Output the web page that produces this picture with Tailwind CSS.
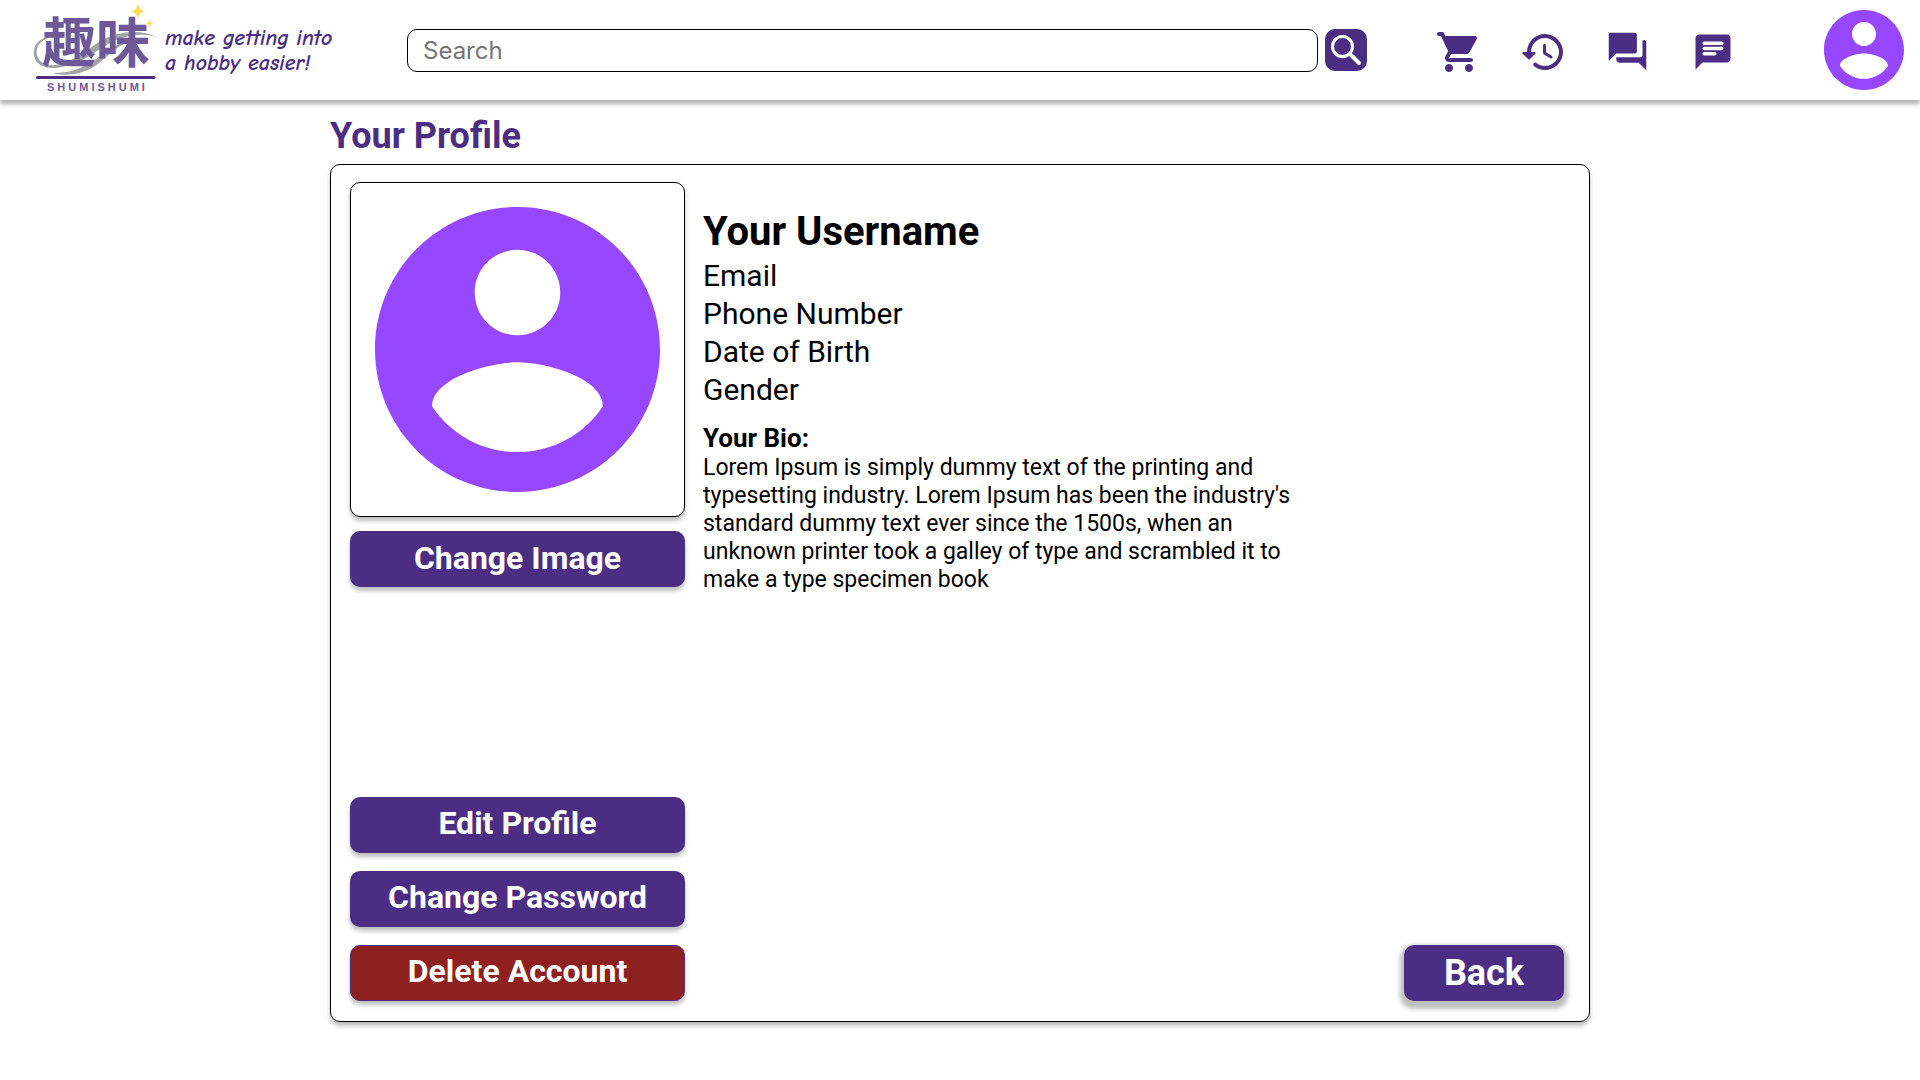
<!DOCTYPE html>
<html lang="en">
<head>
<meta charset="utf-8">
<meta name="viewport" content="width=device-width, initial-scale=1">
<title>Your Profile – Shumishumi</title>
<script src="https://cdn.jsdelivr.net/npm/@tailwindcss/browser@4"></script>
</head>
<body class="flex min-h-screen flex-col bg-white font-['Roboto',sans-serif] text-black">
<header class="flex h-[100px] shrink-0 items-center bg-white pr-4 pl-8 shadow-[0_4px_4px_rgba(0,0,0,0.3)]">
  <a href="#" class="flex shrink-0 items-center" aria-label="Shumishumi home">
    <svg class="h-[100px] w-[126px]" viewBox="32 0 126 100">
      <g fill="#a3a3a3">
        <path d="M55 36C40 36 32 45 34 56C36 66 48 70 62 67C79 64 92 54 105 46C121 36 140 32 156 37C141 29 118 31 101 41C87 49 76 60 61 64C49 67 39 64 37 55C35 46 41 39 55 36Z"/>
        <path d="M53 73C66 77 83 74 95 66C106 58 114 49 127 42C117 43 107 51 96 59C82 69 70 73 53 73Z"/>
      </g>
      <text x="42" y="63" font-size="54" class="fill-[#6d5898] font-['Noto_Sans_CJK_JP',sans-serif] font-bold">趣味</text>
      <path d="M37.500 77.500H154" stroke="#4b2e83" stroke-width="3" stroke-linecap="round"/>
      <text x="47" y="91" font-size="11" class="fill-[#6d5898] font-['Liberation_Sans',sans-serif] font-bold tracking-[3px]">SHUMISHUMI</text>
      <path d="M138 3Q139 10.500 145 11.500Q139 12.500 138 19Q137 12.500 131 11.500Q137 10.500 138 3ZM149.500 19Q150 23 153.500 23.500Q150 24 149.500 28Q149 24 146 23.500Q149 23 149.500 19Z" fill="#ffdb57"/>
    </svg>
    <span class="ml-[7px] w-[172px] pt-0.5 text-[22px] leading-[25px] whitespace-nowrap text-[#4b2e83] italic font-['Comic_Neue','Comic_Sans_MS','Lato',sans-serif] font-bold">make getting into<br>a hobby easier!</span>
  </a>
  <form class="ml-[70px] flex flex-1 items-center gap-[7px]" role="search" onsubmit="return false">
    <input type="search" aria-label="Search" placeholder="Search" class="h-[43px] min-w-0 flex-1 rounded-[10px] border border-black px-[15px] text-2xl font-['Inter',sans-serif] placeholder:text-[#757575]">
    <button aria-label="Search" class="size-[42px] shrink-0 rounded-[10px] bg-[#4b2e83]">
      <svg class="size-[42px]" viewBox="0 0 42 42" fill="none" stroke="#fff" stroke-linecap="round"><circle cx="17.500" cy="17.500" r="10" stroke-width="3"/><path d="M25.500 25.500L34 34" stroke-width="4"/></svg>
    </button>
  </form>
  <nav class="ml-[68px] flex shrink-0 items-center text-[#4b2e83]" aria-label="Main">
    <div class="flex items-center pt-[3px]">
      <a href="#" aria-label="Cart"><svg class="size-12" viewBox="0 0 24 24" fill="currentColor"><path d="M7 18c-1.100 0-1.990.9-1.990 2S5.900 22 7 22s2-.9 2-2-.9-2-2-2zM1 3c0 .55.45 1 1 1h1l3.600 7.590-1.350 2.440C4.520 15.370 5.480 17 7 17h11c.55 0 1-.45 1-1s-.45-1-1-1H7l1.100-2h7.450c.75 0 1.410-.41 1.750-1.030L20.880 5.480c.37-.66-.11-1.480-.87-1.480H5.210l-.67-1.430c-.16-.35-.52-.57-.9-.57H2c-.55 0-1 .45-1 1zm16 15c-1.100 0-1.990.9-1.990 2s.89 2 1.990 2 2-.9 2-2-.9-2-2-2z"/></svg></a>
      <a href="#" aria-label="History" class="ml-9"><svg class="size-12" viewBox="0 0 24 24" fill="currentColor"><path d="M13.260 3C8.170 2.860 4 6.950 4 12H2.210c-.45 0-.67.54-.35.850l2.790 2.800c.2.2.51.2.71 0l2.790-2.800c.31-.31.09-.85-.36-.85H6c0-3.900 3.180-7.050 7.100-7 3.720.05 6.850 3.180 6.900 6.900.05 3.910-3.100 7.100-7 7.100-1.610 0-3.100-.55-4.280-1.480-.4-.31-.96-.28-1.320.080-.42.42-.39 1.130.080 1.490C9 20.290 10.910 21 13 21c5.050 0 9.140-4.170 9-9.260-.13-4.690-4.050-8.610-8.740-8.740zm-.51 5c-.41 0-.75.34-.75.75v3.680c0 .35.19.68.49.86l3.120 1.850c.36.21.82.090 1.030-.26.21-.36.090-.82-.26-1.030l-2.880-1.710v-3.400c0-.4-.34-.74-.75-.74z"/></svg></a>
      <a href="#" aria-label="Forum" class="ml-[38px]"><svg class="size-[45px]" viewBox="0 0 24 24" fill="currentColor"><path d="M21 6h-1v8c0 .55-.45 1-1 1H6v1c0 1.100.9 2 2 2h10l4 4V7c0-.55-.45-1-1-1zm-4 6V3c0-.55-.45-1-1-1H3c-.55 0-1 .45-1 1v14l4-4h10c.55 0 1-.45 1-1z"/></svg></a>
      <a href="#" aria-label="Messages" class="ml-[42px]"><svg class="size-[42px]" viewBox="0 0 24 24" fill="currentColor"><path d="M20 2H4c-1.100 0-2 .9-2 2v18l4-4h14c1.100 0 2-.9 2-2V4c0-1.100-.9-2-2-2zM7 9h10c.55 0 1 .45 1 1s-.45 1-1 1H7c-.55 0-1-.45-1-1s.45-1 1-1zm6 5H7c-.55 0-1-.45-1-1s.45-1 1-1h6c.55 0 1 .45 1 1s-.45 1-1 1zm4-6H7c-.55 0-1-.45-1-1s.45-1 1-1h10c.55 0 1 .45 1 1s-.45 1-1 1z"/></svg></a>
    </div>
    <a href="#" aria-label="Your profile" class="ml-[90px]"><svg class="size-20" viewBox="2 2 20 20" fill="#9747ff"><path d="M12 2C6.480 2 2 6.480 2 12s4.480 10 10 10 10-4.480 10-10S17.520 2 12 2zm0 3c1.660 0 3 1.340 3 3s-1.340 3-3 3-3-1.340-3-3 1.340-3 3-3zm0 14.200c-2.500 0-4.710-1.280-6-3.220.03-1.990 4-3.080 6-3.080 1.990 0 5.970 1.090 6 3.080-1.290 1.940-3.500 3.220-6 3.220z"/></svg></a>
  </nav>
</header>
<main class="mx-auto flex w-full max-w-[1260px] flex-1 flex-col pt-[13px] pb-[58px]">
  <h1 class="text-4xl leading-[46px] font-bold text-[#4b2e83]">Your Profile</h1>
  <section class="mt-[5px] flex flex-1 rounded-[10px] border border-black pt-[17px] pr-[25px] pb-5 pl-[19px] shadow-[0_4px_4px_rgba(0,0,0,0.25)]">
    <div class="flex w-[335px] shrink-0 flex-col">
      <div class="flex aspect-square items-center justify-center rounded-[10px] border border-black bg-white shadow-[0_4px_4px_rgba(0,0,0,0.25)]">
        <svg class="size-[285px]" viewBox="2 2 20 20" fill="#9747ff" role="img" aria-label="Profile picture"><path d="M12 2C6.480 2 2 6.480 2 12s4.480 10 10 10 10-4.480 10-10S17.520 2 12 2zm0 3c1.660 0 3 1.340 3 3s-1.340 3-3 3-3-1.340-3-3 1.340-3 3-3zm0 14.200c-2.500 0-4.710-1.280-6-3.220.03-1.990 4-3.080 6-3.080 1.990 0 5.970 1.090 6 3.080-1.290 1.940-3.500 3.220-6 3.220z"/></svg>
      </div>
      <button class="mt-3.5 h-14 rounded-[10px] bg-[#4b2e83] pb-0.5 text-[32px] font-bold text-white shadow-[0_4px_4px_rgba(0,0,0,0.25)]">Change Image</button>
      <div class="mt-auto flex flex-col gap-[18px]">
        <button class="h-14 rounded-[10px] bg-[#4b2e83] pb-1 text-[32px] font-bold text-white shadow-[0_4px_4px_rgba(0,0,0,0.25)]">Edit Profile</button>
        <button class="h-14 rounded-[10px] bg-[#4b2e83] pb-1 text-[32px] font-bold text-white shadow-[0_4px_4px_rgba(0,0,0,0.25)]">Change Password</button>
        <button class="h-14 rounded-[10px] border border-[#4b2e83] bg-[#8e2020] pb-1 text-[32px] font-bold text-white shadow-[0_4px_4px_rgba(0,0,0,0.25)]">Delete Account</button>
      </div>
    </div>
    <div class="ml-[18px] flex flex-1 flex-col pt-[25px]">
      <h2 class="text-[40px] leading-[50px] font-bold">Your Username</h2>
      <ul class="text-[30px] leading-[38px]">
        <li>Email</li>
        <li>Phone Number</li>
        <li>Date of Birth</li>
        <li>Gender</li>
      </ul>
      <h3 class="mt-3.5 text-[26px] leading-[31px] font-bold">Your Bio:</h3>
      <p class="max-w-[600px] text-[23px] leading-7">Lorem Ipsum is simply dummy text of the printing and typesetting industry. Lorem Ipsum has been the industry's standard dummy text ever since the 1500s, when an unknown printer took a galley of type and scrambled it to make a type specimen book</p>
      <button class="mt-auto h-14 w-40 self-end rounded-[10px] bg-[#4b2e83] text-4xl font-bold text-white shadow-[0_4px_4px_4px_rgba(0,0,0,0.25)]">Back</button>
    </div>
  </section>
</main>
</body>
</html>
